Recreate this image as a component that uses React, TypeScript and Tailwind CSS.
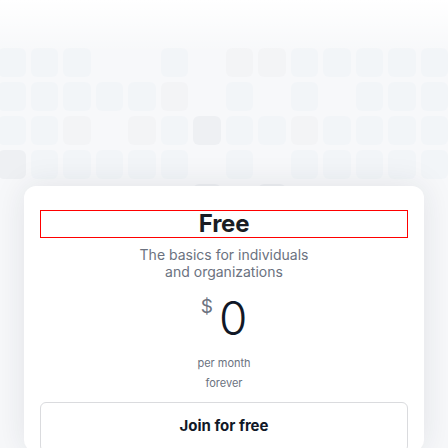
const cells: string[][] = [
  ['b', 'b', 'b', '', '', 'b', '', 'g', 'g', 'b', 'b', 'b', 'b', 'b'],
  ['b', 'b', 'b', 'b', 'b', 'g', '', 'b', '', 'b', '', 'b', 'b', 'b'],
  ['b', 'b', 'g', '', 'g', 'b', 'd', 'b', 'b', 'g', 'b', 'b', 'b', 'b'],
  ['d', 'b', 'b', 'b', 'b', 'b', '', 'b', '', 'b', 'b', 'b', 'b', 'b'],
  ['', '', '', '', '', '', 'd', '', 'd', '', '', '', '', ''],
];

function cellClass(k: string) {
  if (k === 'b') return 'h-[29px] w-[29px] rounded-[6px] bg-[#f2f5f8]';
  if (k === 'g') return 'h-[29px] w-[29px] rounded-[6px] bg-[#f3f4f6]';
  if (k === 'd') return 'h-[29px] w-[29px] rounded-[6px] bg-[#eef0f3]';
  return 'h-[29px] w-[29px]';
}

export default function App() {
  return (
    <div
      className="relative h-[448px] w-[448px] overflow-hidden bg-[#f7f8fa]"
      style={{ fontFamily: 'Inter, "Liberation Sans", sans-serif' }}
    >
      {/* decorative tile grid */}
      <div className="pointer-events-none absolute inset-0">
        <div className="ml-[-2px] mt-[48px] flex flex-col gap-[5px]">
          {cells.map((row, i) => (
            <div key={i} className="flex gap-[5px]">
              {row.map((k, j) => (
                <div key={j} className={cellClass(k)} />
              ))}
            </div>
          ))}
        </div>
        <div className="absolute left-0 right-0 top-0 h-[52px] bg-gradient-to-b from-white to-white/0" />
      </div>

      <div className="relative px-6 pt-[186px]">
        <div className="rounded-xl bg-white px-4 pt-6 shadow-[0_0_32px_rgba(30,41,59,0.10)]">
          <div className="flex h-[28px] items-center justify-center border border-[#ff0000]">
            <h2 className="text-[24px] font-bold leading-none tracking-[-0.01em] text-[#1a1d24]">Free</h2>
          </div>
          <p className="mx-auto mt-2 w-[180px] text-center text-[14px] leading-[17px] text-[#6b7280]">
            The basics for individuals and organizations
          </p>
          <div className="mt-[15px] flex items-start justify-center gap-[6px]">
            <span className="mt-[2px] text-[19px] leading-none text-[#6b7280]">$</span>
            <span className="text-[46px] font-light leading-none text-[#111827]">0</span>
          </div>
          <div className="mt-[12px] flex flex-col items-center text-[11px] leading-[20px] text-[#6b7280]">
            <span>per month</span>
            <span>forever</span>
          </div>
          <button className="mt-[9px] flex h-[50px] w-full items-start justify-center rounded-md border border-[#dadbde] bg-white pt-[12px] text-[15px] font-bold text-[#111827]">
            Join for free
          </button>
        </div>
      </div>
    </div>
  );
}
